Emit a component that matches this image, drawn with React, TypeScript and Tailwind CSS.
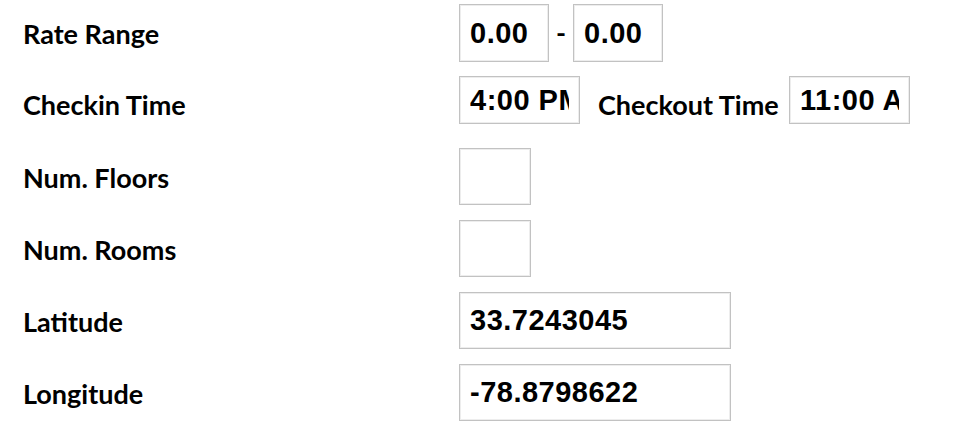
import React from "react";

const boxClass =
  "h-full px-[10px] border border-[#c2c2c2] shadow-[inset_0_0_0_1px_#ededed] bg-white text-black font-bold text-[29px] tracking-[0.5px] outline-none font-['Liberation_Sans',Arial,sans-serif]";

const labelClass = "text-[27px] font-bold text-black font-['Lato','Open_Sans',sans-serif]";

function Field({ value, width }: { value: string; width: string }) {
  return <input readOnly value={value} className={`${boxClass} ${width}`} />;
}

function Row({
  label,
  height,
  top,
  pad = "pt-[3px]",
  children,
}: {
  label: string;
  height: string;
  top: string;
  pad?: string;
  children: React.ReactNode;
}) {
  return (
    <div className={`flex items-center ${height} ${top}`}>
      <div className={`w-[459px] pl-[23px] ${pad} ${labelClass}`}>{label}</div>
      <div className="flex items-center h-full">{children}</div>
    </div>
  );
}

export default function App() {
  return (
    <div className="w-[960px] h-[436px] bg-white pt-[4px] overflow-hidden">
      <Row label="Rate Range" height="h-[58px]" top="mt-0">
        <Field value="0.00" width="w-[90px]" />
        <span className={`w-[24px] text-center ${labelClass}`}>-</span>
        <Field value="0.00" width="w-[90px]" />
      </Row>

      <Row label="Checkin Time" height="h-[48px]" top="mt-[14px]" pad="pt-[10px]">
        <Field value="4:00 PM" width="w-[121px]" />
        <span className={`w-[209px] pl-[18px] pt-[10px] ${labelClass}`}>Checkout Time</span>
        <Field value="11:00 AM" width="w-[121px]" />
      </Row>

      <Row label="Num. Floors" height="h-[57px]" top="mt-[24px]">
        <Field value="" width="w-[72px]" />
      </Row>

      <Row label="Num. Rooms" height="h-[57px]" top="mt-[15px]">
        <Field value="" width="w-[72px]" />
      </Row>

      <Row label="Latitude" height="h-[57px]" top="mt-[15px]">
        <Field value="33.7243045" width="w-[272px]" />
      </Row>

      <Row label="Longitude" height="h-[57px]" top="mt-[15px]">
        <Field value="-78.8798622" width="w-[272px]" />
      </Row>
    </div>
  );
}
